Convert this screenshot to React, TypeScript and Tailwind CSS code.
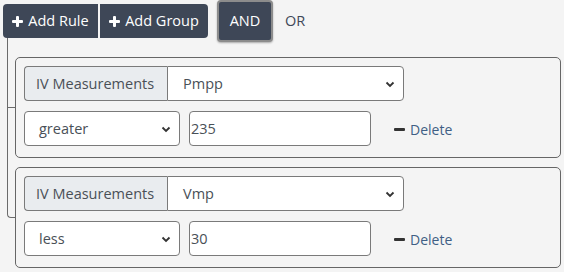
import React from "react";

const font = { fontFamily: '"Open Sans", "Noto Sans", sans-serif' };

const Plus = () => (
  <svg width="11" height="11" viewBox="0 0 11 11" className="mr-[5px]">
    <rect x="4" y="0" width="3" height="11" rx="1" fill="currentColor" />
    <rect x="0" y="4" width="11" height="3" rx="1" fill="currentColor" />
  </svg>
);

const Chevron = () => (
  <svg width="12" height="12" viewBox="0 0 12 12" className="absolute right-[7px] top-1/2 -translate-y-1/2">
    <path d="M2.5 4.5 L6 8 L9.5 4.5" fill="none" stroke="#333" strokeWidth="1.8" />
  </svg>
);

const rules = [
  { field: "Pmpp", op: "greater", value: "235" },
  { field: "Vmp", op: "less", value: "30" },
];

function Rule({ field, op, value }: { field: string; op: string; value: string }) {
  return (
    <div className="flex flex-col gap-[10px]">
      <div className="flex h-[35px] w-[380px]">
        <div className="flex w-[143px] items-center rounded-l-[4px] border border-r-0 border-[#7a7a7a] bg-[#e9ecef] pl-[11px] text-[#495057]">
          IV Measurements
        </div>
        <div className="relative flex flex-1 items-center rounded-r-[4px] border border-[#7a7a7a] bg-white pl-[15px] text-[#495057]">
          {field}
          <Chevron />
        </div>
      </div>
      <div className="flex h-[35px] items-center">
        <div className="relative flex h-full w-[156px] items-center rounded-[4px] border border-[#7a7a7a] bg-white pl-[14px] text-[#495057]">
          {op}
          <Chevron />
        </div>
        <div className="ml-[9px] flex h-full w-[182px] items-center rounded-[4px] border border-[#7a7a7a] bg-white pl-[1px] text-[#495057]">
          {value}
        </div>
        <button className="ml-[23px] mt-[2px] flex items-center text-[14px] text-[#3f5f85]">
          <span className="mr-[5px] inline-block h-[3px] w-[11px] rounded-[1px] bg-[#333]" />
          Delete
        </button>
      </div>
    </div>
  );
}

export default function App() {
  return (
    <div className="h-[272px] w-[564px] overflow-hidden bg-[#f4f4f4] text-[14.5px]" style={font}>
      <div className="flex items-center pl-[3px]">
        <div className="flex gap-[2px] pt-[4px] pb-[4px]">
          <button className="flex h-[34px] w-[95px] items-center justify-center rounded-l-[4px] bg-[#3e4757] text-white">
            <Plus />
            Add Rule
          </button>
          <button className="flex h-[34px] w-[108px] items-center justify-center rounded-r-[4px] bg-[#3e4757] text-white">
            <Plus />
            Add Group
          </button>
        </div>
        <button className="ml-[9px] flex h-[42px] w-[56px] items-center justify-center rounded-[4px] border-2 border-[#8c8c8c] bg-[#3e4757] text-white shadow-[0_1px_2px_rgba(0,0,0,0.3)]">
          AND
        </button>
        <span className="ml-[12px] text-[#3e4757]">OR</span>
      </div>

      <div className="ml-[7px] flex flex-col gap-[9px] pt-[15px]">
        {rules.map((r, i) => {
          const last = i === rules.length - 1;
          return (
            <div key={i} className="relative pl-[8px]">
              <div
                className={
                  i === 0
                    ? "absolute left-0 -top-[19px] h-[calc(50%+19px)] w-[8px] border-b border-l border-[#6b6b6b]"
                    : "absolute left-0 -top-[9px] h-[calc(50%+9px)] w-[8px] rounded-bl-[4px] border-b border-l border-[#6b6b6b]"
                }
              />
              {!last && <div className="absolute left-0 top-1/2 -bottom-[9px] border-l border-[#6b6b6b]" />}
              <div className="w-[546px] rounded-[5px] border border-[#666] bg-[#f4f4f4] pl-[8px] pt-[8px] pb-[11px]">
                <Rule {...r} />
              </div>
            </div>
          );
        })}
      </div>
    </div>
  );
}
